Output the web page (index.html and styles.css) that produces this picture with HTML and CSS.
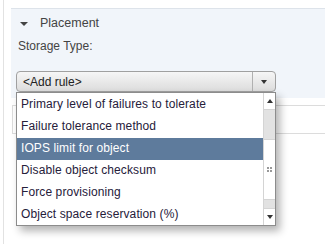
FILE: index.html
```html
<!DOCTYPE html>
<html lang="en">
<head>
  <meta charset="UTF-8">
  <title>Storage policy - Placement</title>
  <link rel="stylesheet" href="styles.css">
</head>
<body>
  <div class="page">
    <!-- Placement section -->
    <div class="panel">
      <div class="panel-head">
        <span class="caret"></span>
        <span>Placement</span>
      </div>
      <div class="field-label">Storage Type:</div>
      <div class="select-wrap">
        <div class="select">
          <span class="select-text">&lt;Add rule&gt;</span>
          <span class="select-btn"><span class="arrow-down"></span></span>
        </div>

        <!-- Open dropdown list -->
        <div class="dropdown">
          <ul class="options">
            <li>Primary level of failures to tolerate</li>
            <li>Failure tolerance method</li>
            <li class="selected">IOPS limit for object</li>
            <li>Disable object checksum</li>
            <li>Force provisioning</li>
            <li>Object space reservation (%)</li>
          </ul>
          <div class="scrollbar">
            <div class="sb-btn"><span class="arrow-up small"></span></div>
            <div class="sb-track top"></div>
            <div class="sb-thumb"><span class="grip"></span></div>
            <div class="sb-track bottom"></div>
            <div class="sb-btn"><span class="arrow-down small"></span></div>
          </div>
        </div>
      </div>
    </div>

    <!-- Grid behind the list -->
    <div class="grid-head"></div>
  </div>
</body>
</html>
```

FILE: styles.css
```css
/* Reset */
* { margin: 0; padding: 0; box-sizing: border-box; }
body {
  font-family: 'Liberation Sans', Arial, sans-serif;
  font-size: 12px;
  color: #333;
  background: #fff;
  width: 325px;
  height: 244px;
  overflow: hidden;
}

.page {
  margin-left: 3px;
  border-left: 1px solid #e2e2e2;
  height: 244px;
  padding-top: 8px;
}

/* Placement panel */
.panel {
  margin-left: 7px;
  background: #f1f5fa;
  border-top: 1px solid #dde3ea;
  height: 90px;
}
.panel-head {
  display: flex;
  align-items: center;
  height: 24px;
  padding: 4px 0 0 9px;
  font-size: 12.5px;
  color: #444;
}
.caret {
  width: 0;
  height: 0;
  border-left: 4px solid transparent;
  border-right: 4px solid transparent;
  border-top: 4px solid #444;
  margin: 2px 12px 0 0;
}
.field-label {
  padding: 6px 0 0 7px;
  height: 38px;
  font-size: 12px;
  color: #444;
}

/* Select */
.select-wrap {
  position: relative;
  margin-left: 5px;
  width: 260px;
}
.select {
  display: flex;
  align-items: center;
  height: 21px;
  border: 1px solid #a0a0a0;
  border-radius: 4px;
  background: linear-gradient(#f6f6f6, #dcdcdc);
}
.select-text {
  flex: 1;
  padding-left: 6px;
  font-size: 12px;
  color: #222;
}
.select-btn {
  width: 23px;
  height: 100%;
  border-left: 1px solid #b0b0b0;
  display: flex;
  align-items: center;
  justify-content: center;
}
.arrow-down, .arrow-up {
  width: 0;
  height: 0;
  border-left: 3px solid transparent;
  border-right: 3px solid transparent;
}
.arrow-down { border-top: 4px solid #333; }
.arrow-up { border-bottom: 4px solid #333; }

/* Dropdown list */
.dropdown {
  position: absolute;
  top: 21px;
  left: 0;
  width: 260px;
  height: 134px;
  display: flex;
  background: #fff;
  border: 1px solid #8c8c8c;
  box-shadow: 4px 5px 8px rgba(0,0,0,0.3);
}
.options {
  list-style: none;
  flex: 1;
  padding-top: 1px;
}
.options li {
  height: 22px;
  line-height: 21px;
  padding-left: 4px;
  font-size: 12px;
  letter-spacing: 0.1px;
  color: #26203a;
  white-space: nowrap;
}
.options li.selected {
  background: #5e7b9c;
  color: #fff;
}

/* Scrollbar */
.scrollbar {
  width: 12px;
  display: flex;
  flex-direction: column;
  border-left: 1px solid #d4d4d4;
}
.sb-btn {
  height: 17px;
  background: #fff;
  border-bottom: 1px solid #d4d4d4;
  display: flex;
  align-items: center;
  justify-content: center;
}
.sb-btn:last-child {
  border-bottom: none;
  border-top: 1px solid #d4d4d4;
}
.sb-track { background: #e2e2e2; }
.sb-track.top { height: 29px; }
.sb-track.bottom { height: 8px; }
.sb-thumb {
  flex: 1;
  background: #fff;
  border-top: 1px solid #d4d4d4;
  border-bottom: 1px solid #d4d4d4;
  display: flex;
  align-items: center;
  justify-content: center;
}
.grip {
  width: 5px;
  height: 5px;
  background:
    linear-gradient(#999, #999) 0 0 / 2px 2px no-repeat,
    linear-gradient(#999, #999) 3px 0 / 2px 2px no-repeat,
    linear-gradient(#999, #999) 0 3px / 2px 2px no-repeat,
    linear-gradient(#999, #999) 3px 3px / 2px 2px no-repeat;
}

/* Grid header behind the dropdown */
.grid-head {
  margin: 7px 0 0 8px;
  height: 29px;
  border: 1px solid #dcdcdc;
  border-right: none;
}
```
